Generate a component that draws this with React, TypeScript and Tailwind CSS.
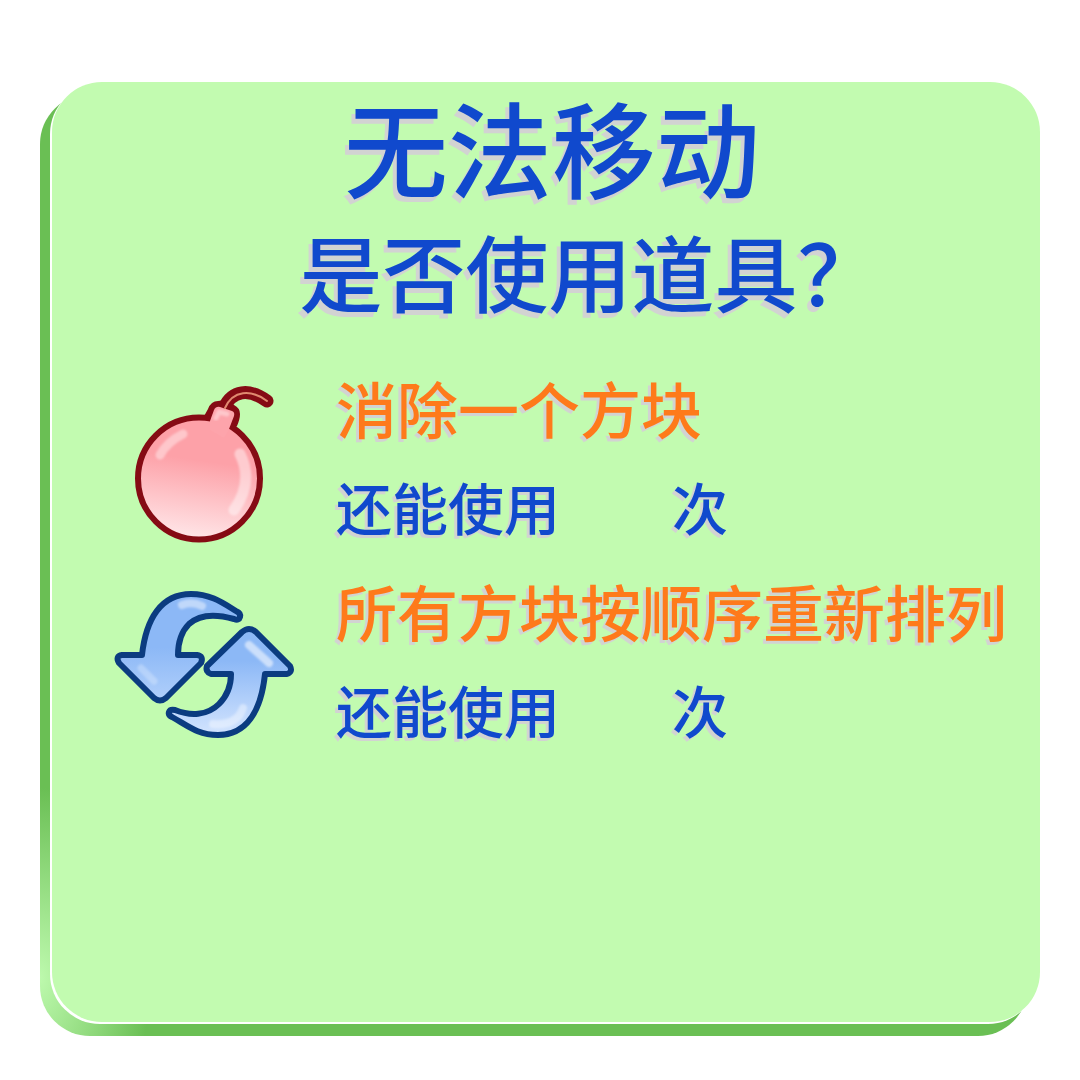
import React from "react";

const largeShadow = "[text-shadow:-4px_5px_0_#d2d3d2]";
const smallShadow = "[text-shadow:-3px_3px_0_#d2d3d2]";

function BombIcon() {
  return (
    <svg viewBox="0 0 170 175" className="block w-[170px]" role="img" aria-label="炸弹">
      <defs>
        <linearGradient id="bombFill" x1="0.55" y1="0" x2="0.4" y2="1">
          <stop offset="0.35" stopColor="#fda1a8" />
          <stop offset="1" stopColor="#ffe7e9" />
        </linearGradient>
        <filter id="bombSoft" x="-50%" y="-50%" width="200%" height="200%">
          <feGaussianBlur stdDeviation="1" />
        </filter>
      </defs>
      <path d="M104 32 C112 14 129 12 147 25" fill="none" stroke="#850b14" strokeWidth="13" strokeLinecap="round" />
      <path
        d="M83 42 L88 33 Q91 25 98 25 L106 24 L114 29 Q120 32 120 38 Q120 43 117 50 L108 58 Z"
        fill="#850b14"
      />
      <circle cx="79" cy="102.500" r="61" fill="url(#bombFill)" stroke="#850b14" strokeWidth="6" />
      <path d="M90 45 L94 34 Q96 30 100 31 L112 35 Q115 36 114 40 L109 53 L104 62 L90 54 Z" fill="#fda4ab" />
      <path d="M105 32 C113 14 131 13 147 25" fill="none" stroke="#e08a70" strokeWidth="2" strokeLinecap="round" />
      <path d="M96 42 L99 36 L107 38" fill="none" stroke="#fec7cb" strokeWidth="5" strokeLinecap="round" strokeLinejoin="round" filter="url(#bombSoft)" />
      <g fill="none" stroke="#fff" strokeLinecap="round" filter="url(#bombSoft)">
        <path d="M40 79 Q47 66 63 58" strokeWidth="9" opacity="0.400" />
        <path d="M120 78 Q134 106 114 134" strokeWidth="11" opacity="0.450" />
      </g>
    </svg>
  );
}

function ShuffleIcon() {
  return (
    <svg viewBox="0 0 200 170" className="block w-[200px]" role="img" aria-label="重新排列">
      <defs>
        <linearGradient id="arrowDown" x1="0" y1="0" x2="0" y2="1">
          <stop offset="0.5" stopColor="#8cb8f6" />
          <stop offset="1" stopColor="#b0cffb" />
        </linearGradient>
        <linearGradient id="arrowUp" x1="0" y1="0" x2="0" y2="1">
          <stop offset="0.3" stopColor="#8cb8f6" />
          <stop offset="1" stopColor="#d3e4fe" />
        </linearGradient>
        <filter id="arrowSoft" x="-50%" y="-50%" width="200%" height="200%">
          <feGaussianBlur stdDeviation="1" />
        </filter>
      </defs>
      <g stroke="#0b3c80" strokeWidth="6" strokeLinejoin="round">
        <path
          d="M37 76 C41 40 56 15 86 15 C106 15 118 24 131 32 Q136 34 135 38 Q134 42 129 40 C115 36 97 33 84 45 C76 53 73 63 73 76 L92 76 Q99 77 96 84 L61 119 Q55 124 49 119 L14 84 Q10 77 17 76 Z"
          fill="url(#arrowDown)"
        />
        <path
          d="M126 95 L106 95 Q100 93 102 87 L137 53 Q144 47 151 53 L185 87 Q188 93 182 95 L160 95 C156 133 141 156 113 156 C93 156 83 147 67 138 Q63 136 64 133 Q65 130 70 131 C85 137 102 137 114 125 C122 117 126 108 126 95 Z"
          fill="url(#arrowUp)"
        />
      </g>
      <g fill="none" stroke="#fff" strokeLinecap="round" filter="url(#arrowSoft)">
        <path d="M77 26 Q87 22 97 27" strokeWidth="8" opacity="0.450" />
        <path d="M36 89 L49 102" strokeWidth="7" opacity="0.250" />
        <path d="M144 66 L164 84" strokeWidth="8" opacity="0.550" />
        <path d="M108 145 Q132 147 138 129" strokeWidth="8" opacity="0.400" />
      </g>
    </svg>
  );
}

function Item({ icon, title }: { icon: React.ReactNode; title: string }) {
  return (
    <li className="flex items-start whitespace-nowrap">
      <div className="flex w-[284px] shrink-0 justify-center pt-3 pl-[22px]">{icon}</div>
      <div>
        <h2 className={`text-[61px] leading-[88px] text-[#fe7a1b] ${smallShadow}`}>{title}</h2>
        <p className={`mt-3 flex gap-[112px] text-[56px] leading-[84px] text-[#1049cd] ${smallShadow}`}>
          <span>还能使用</span>
          <span>次</span>
        </p>
      </div>
    </li>
  );
}

export default function App() {
  return (
    <div className="min-h-screen bg-white pt-[94px] pr-[52px] pb-11 pl-10 font-['Noto_Sans_CJK_SC',sans-serif] font-medium">
      <div className="flex flex-col rounded-[50px] bg-[#6abf54] bg-[radial-gradient(110px_190px_at_0px_884px,#bdf9ad,#6abf54)] pb-[14px] pl-3">
        <main className="-mt-3 -mr-3 min-h-[940px] rounded-[50px] bg-[#c2fbb0] shadow-[-2px_2px_0_#fff]">
          <header className="text-center whitespace-nowrap text-[#1049cd]">
            <h1 className={`pl-3 text-[104px] leading-[128px] ${largeShadow}`}>无法移动</h1>
            <p className={`pl-[88px] text-[83px] leading-[120px] ${largeShadow}`}>是否使用道具？</p>
          </header>
          <ul className="mt-[34px] flex flex-col gap-4">
            <Item icon={<BombIcon />} title="消除一个方块" />
            <Item icon={<ShuffleIcon />} title="所有方块按顺序重新排列" />
          </ul>
        </main>
      </div>
    </div>
  );
}
